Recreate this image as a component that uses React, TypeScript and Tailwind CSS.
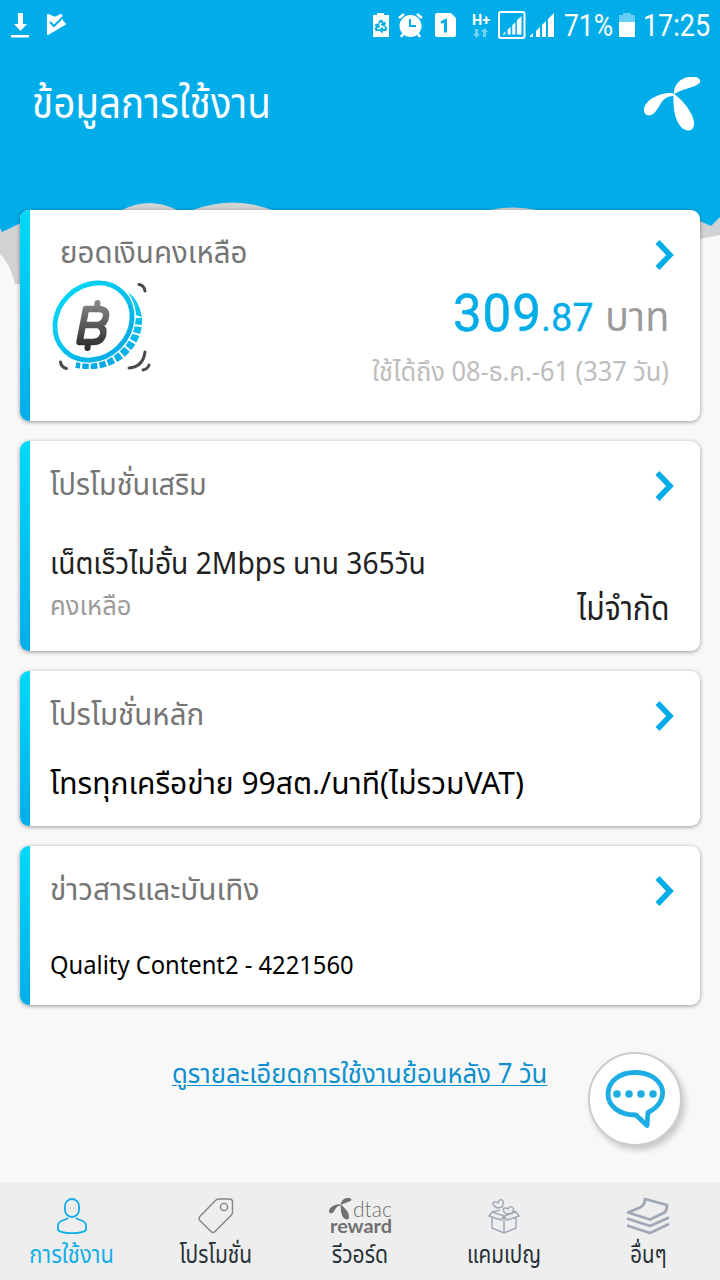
import type { ReactNode } from 'react';
import { Recycle } from 'lucide-react';

const navItems = [
  { label: 'การใช้งาน', icon: <UserIcon />, className: 'text-[#10ade9]', scale: 'scale-x-91' },
  { label: 'โปรโมชั่น', icon: <TagIcon />, className: 'text-[#263038]', scale: 'scale-x-87' },
  { label: 'รีวอร์ด', icon: <RewardIcon />, className: 'text-[#263038]', scale: 'scale-x-88' },
  { label: 'แคมเปญ', icon: <GiftIcon />, className: 'text-[#263038]', scale: 'scale-x-86' },
  { label: 'อื่นๆ', icon: <LayersIcon />, className: 'text-[#263038]', scale: 'scale-x-85' },
];

function UserIcon() {
  return (
    <svg width="32" height="38" viewBox="0 0 32 38" fill="none" stroke="#10ade9" strokeWidth="1.8">
      <rect x="9" y="2" width="14" height="18" rx="7" />
      <path d="M12 21C11 23 2 23 2 28V32C2 37.500 30 37.500 30 32V28C30 23 21 23 20 21" />
    </svg>
  );
}

function TagIcon() {
  return (
    <svg width="36" height="36" viewBox="0 0 36 36" fill="none" stroke="#858585" strokeWidth="1.4">
      <path d="M20 1H31.500Q34.500 1 34.500 4V14Q34.500 16 33 17.500L17 33.500Q15 35.500 13 33.500L1.800 22.500Q.3 20.500 1.800 18.500L17.500 2.500Q19 1 20 1Z" />
      <circle cx="26" cy="9" r="3.600" />
    </svg>
  );
}

function PropellerPaths() {
  return (
    <>
      <path d="M30 19C29 8 36 1 45 0C52-1 57 1 56 5C54 10 38 12 31 16.500Z" />
      <path d="M29 16C16 15 0 23 0 33C0 40 8 40 12 34C16 29 19 18 30 19Z" />
      <path d="M30 17C39 23 51 38 50 48C49 55 42 55 37 50C30 42 29 29 29.500 17Z" />
    </>
  );
}

function RewardIcon() {
  return (
    <svg width="72" height="38" viewBox="-4 0 72 38" fill="#707070" className="overflow-visible">
      <g transform="translate(1 1) scale(.4)">
        <PropellerPaths />
      </g>
      <text x="25" y="19.500" fontSize="21" fontFamily="Lato" fontWeight="300" textLength="39" lengthAdjust="spacingAndGlyphs">dtac</text>
      <text x="2" y="36" fontSize="18" fontFamily="Lato" fontWeight="700" textLength="62" lengthAdjust="spacingAndGlyphs">reward</text>
    </svg>
  );
}

function GiftIcon() {
  return (
    <svg width="32" height="36" viewBox="0 0 32 36" fill="none" stroke="#a3abb7" strokeWidth="1.5" strokeLinejoin="round">
      <path d="M4 19V30L16 35L28 30V19M16 18V35M4 14L16 18L13 22L1 18ZM28 14L16 18L19 22L31 18ZM4 14L12 12M28 14L25 13" />
      <path d="M9 10C5 8 4 5 6 4Q8 3 10 5Q11 1 14 2Q17 4 14 9Z" />
      <path d="M18 16C14 13 15 10 17 10Q19 10 20 11Q22 8 24 9Q27 11 24 15Z" />
    </svg>
  );
}

function LayersIcon() {
  return (
    <svg width="44" height="38" viewBox="0 0 44 38" fill="none" stroke="#a0a8b6" strokeWidth="2.800" strokeLinejoin="round">
      <path d="M19 2L41 8Q41 13 38.500 15.500L24 22.500L2 15.500L14 10.500Q19 8 19 2Z" />
      <path d="M1 21.500L24 29L43 20.500M1 28.500L24 36L43 27" />
    </svg>
  );
}

function CoinIcon() {
  return (
    <svg width="102" height="98" viewBox="0 0 102 98" fill="none">
      <defs>
        <linearGradient id="coin" gradientUnits="userSpaceOnUse" x1="0" y1="0" x2="0" y2="90">
          <stop stopColor="#00d8f8" />
          <stop offset="1" stopColor="#05a8e5" />
        </linearGradient>
        <linearGradient id="baht" gradientUnits="userSpaceOnUse" x1="0" y1="22" x2="0" y2="70">
          <stop stopColor="#8c8c8c" />
          <stop offset="1" stopColor="#2c2c2c" />
        </linearGradient>
      </defs>
      <path d="M88 40Q89 59 75 73Q57 91 26 86" stroke="url(#coin)" strokeWidth="8" strokeDasharray="6.500 2" />
      <path d="M78 14Q89 22 92 39L86 37Q84 24 78 14Z" fill="url(#coin)" />
      <ellipse cx="43.500" cy="43.500" rx="42" ry="37" transform="rotate(-45 43.500 43.500)" fill="white" stroke="white" strokeWidth="5.500" />
      <ellipse cx="43.500" cy="43.500" rx="41" ry="36" transform="rotate(-45 43.500 43.500)" stroke="url(#coin)" strokeWidth="4.800" />
      <g stroke="url(#baht)" strokeWidth="6.500" strokeLinejoin="round" strokeLinecap="round">
        <path d="M36 31H48Q57 31 56 38Q55 46 48 47H34M48 47Q55 50 53 57Q51 64 43 64H29.500L36 31" />
        <path d="M47.500 25L47 31M38 64L37.500 70" strokeWidth="6" />
      </g>
      <g stroke="#4a4a4a" strokeWidth="3" strokeLinecap="round">
        <path d="M89 6.500Q94 7 95 13M10.500 84Q11 89 16.500 90.500M95 74Q93 89 79 90M93 92Q98 91 99 87" />
      </g>
    </svg>
  );
}

function SignalIcon() {
  return <path d="M0 24V23L3 20V24ZM6 24V18L10 14V24ZM12 24V12L16 8V24ZM18 24V6L24 0V24Z" />;
}

function StatusBar() {
  return (
    <div className="flex h-[50px] shrink-0 items-center justify-between pl-[11px] text-white">
      <div className="flex items-center gap-[17px]">
        <svg width="18" height="25" viewBox="0 0 18 25" fill="white">
          <path d="M7 0H12V11H16L9.500 18L3 11H7ZM0 22H18V24.500H0Z" />
        </svg>
        <svg width="21" height="22" viewBox="0 0 21 22">
          <path d="M2 1L9 4L15 1L16 7L19 10L2 20Z" fill="white" stroke="white" strokeWidth="2" strokeLinejoin="round" />
          <path d="M4 8L8 12L18 2" stroke="#00ade9" strokeWidth="2" fill="none" />
          <path d="M10 6L16 1" stroke="white" strokeWidth="2" fill="none" />
        </svg>
      </div>
      <svg className="font-[Roboto]" width="348" height="40" viewBox="372 5 348 40" fill="white">
        <path d="M373 15H377V13H384V15H389V37H373Z" />
        <Recycle x={374} y={19} width={14} height={14} color="#00ade9" strokeWidth={3.5} />
        <circle cx="410.500" cy="26" r="11" />
        <path d="M399 18L404 14M417 14L422 18M403 34L401 37M418 34L420 37" stroke="white" strokeWidth="2.500" />
        <path d="M410 19V26H416" stroke="#00ade9" strokeWidth="2" fill="none" />
        <path d="M436 13H451L456 18V35Q456 37 454 37H437Q435 37 435 35V15Q435 13 437 13Z" />
        <path d="M441 22.500L445.500 20.500V32.500" stroke="#00ade9" strokeWidth="3" fill="none" />
        <text x="472" y="25" fontSize="14" fontWeight="700" textLength="18" lengthAdjust="spacingAndGlyphs">H+</text>
        <path d="M475 29H478V34H480L476.500 38L473 34H475ZM483 37V32H481L484.500 28L488 32H486V37Z" opacity=".45" />
        <rect x="499" y="12" width="25.500" height="26" rx="2" fill="none" stroke="white" strokeWidth="2" />
        <g transform="translate(503 16) scale(.77)"><SignalIcon /></g>
        <g transform="translate(530 13)"><SignalIcon /></g>
        <text x="564" y="36" fontSize="31" textLength="49" lengthAdjust="spacingAndGlyphs">71%</text>
        <path d="M619 15H623V13H631V15H635V22H619Z" opacity=".4" />
        <path d="M619 22H635V37H619Z" />
        <text x="643" y="36" fontSize="31" textLength="67" lengthAdjust="spacingAndGlyphs">17:25</text>
      </svg>
    </div>
  );
}

interface CardProps {
  title: string;
  titleClass: string;
  className: string;
  children: ReactNode;
}

function Card({ title, titleClass, className, children }: CardProps) {
  return (
    <section className={`flex shrink-0 overflow-hidden rounded-[9px] bg-white shadow-[0_1px_4px_rgba(0,0,0,0.4)] ${className}`}>
      <div className="w-[10px] shrink-0 bg-linear-to-b from-[#00d9f8] to-[#00adea]" />
      <div className="flex min-w-0 flex-1 flex-col pr-[31px] pl-5">
        <div className="flex h-[88px] shrink-0 items-center justify-between">
          <h2 className={`origin-left pb-1 text-[31px] leading-[40px] whitespace-nowrap text-[#757575] ${titleClass}`}>{title}</h2>
          <svg className="mt-0.5 -mr-[6px]" width="20" height="32" viewBox="0 0 20 32" fill="none" stroke="#00ade9" strokeWidth="5.500">
            <path d="M2.500 3L15 16L2.500 29" />
          </svg>
        </div>
        {children}
      </div>
    </section>
  );
}

export default function App() {
  return (
    <div className="grid h-[1280px] w-[720px] grid-rows-[1280px] overflow-hidden bg-[#f8f8f8] font-['Noto_Sans','Noto_Sans_Thai','Open_Sans',sans-serif]">
      {/* Sky and clouds */}
      <svg className="col-start-1 row-start-1" width="720" height="300" viewBox="0 0 720 300">
        <path d="M0 0H720V235L700 239V284H15Q10 263 0 254Z" fill="#d0d2d4" />
        <path d="M0 0H720V217L711 226L700 221H545L537 210Q514 205 490 210L480 221H285L272 210Q233 195 193 210L185 221L177 210Q149 196 122 210L110 221H25L2 232L0 228Z" fill="#00ade9" />
      </svg>

      <div className="col-start-1 row-start-1 flex min-h-0 flex-col">
        <StatusBar />
        <header className="flex h-[160px] shrink-0 items-start justify-between pr-5 pl-8">
          <h1 className="origin-left scale-x-92 pt-[22px] text-[42px] leading-[60px] whitespace-nowrap text-white">ข้อมูลการใช้งาน</h1>
          <svg className="mt-[27px]" width="56" height="55" viewBox="0 0 56 55" fill="white">
            <PropellerPaths />
          </svg>
        </header>

        <main className="flex flex-1 flex-col px-5">
          <Card title="ยอดเงินคงเหลือ" titleClass="-mt-[2px] ml-[10px] scale-x-95" className="mb-5 h-[211px]">
            <div className="-mt-5 flex justify-between">
              <CoinIcon />
              <div className="flex flex-col items-end">
                <p className="flex items-baseline pt-[6px] leading-[60px] whitespace-nowrap">
                  <span className="mr-[-1px] font-[Roboto] text-[51px] tracking-[1px] text-[#00ade9] [-webkit-text-stroke:0.5px]">309</span>
                  <span className="mr-[9px] font-[Roboto] text-[38px] text-[#00ade9] [-webkit-text-stroke:0.3px]">.87</span>
                  <span className="origin-right scale-x-97 text-[41px] text-[#9b9b9b]">บาท</span>
                </p>
                <p className="origin-right scale-x-94 pt-[2px] text-[27px] leading-[42px] whitespace-nowrap text-[#bdbdbd]">ใช้ได้ถึง 08-ธ.ค.-61 (337 วัน)</p>
              </div>
            </div>
          </Card>

          <Card title="โปรโมชั่นเสริม" titleClass="scale-x-93" className="mb-5 h-[210px]">
            <p className="origin-left scale-x-94 pt-px text-[30px] leading-[66px] whitespace-nowrap text-[#212121]">เน็ตเร็วไม่อั้น 2Mbps นาน 365วัน</p>
            <div className="-mt-px flex justify-between leading-[20px]">
              <span className="origin-left scale-x-95 text-[27px] text-[#9b9b9b]">คงเหลือ</span>
              <span className="origin-right scale-x-91 pt-[3px] text-[33px] text-[#212121]">ไม่จำกัด</span>
            </div>
          </Card>

          <Card title="โปรโมชั่นหลัก" titleClass="scale-x-95" className="mb-5 h-[155px]">
            <p className="w-fit pt-px text-[30px] leading-[46px] whitespace-nowrap text-black">โทรทุกเครือข่าย 99สต./นาที(ไม่รวมVAT)</p>
          </Card>

          <Card title="ข่าวสารและบันเทิง" titleClass="scale-x-96" className="h-[159px]">
            <p className="origin-left scale-x-95 text-[25px] leading-[61px] whitespace-nowrap text-black">Quality Content2 - 4221560</p>
          </Card>

          <div className="flex items-start justify-between pt-[47px] pr-[18px] pl-[152px]">
            <a href="#history" className="w-[400px] origin-left scale-x-95 pt-px text-[27px] leading-[40px] whitespace-nowrap text-[#0d8fcf] underline decoration-1 underline-offset-2">
              ดูรายละเอียดการใช้งานย้อนหลัง 7 วัน
            </a>
            <button className="flex size-[94px] shrink-0 items-center justify-center rounded-full border-2 border-[#ccc] bg-white shadow-[3px_4px_6px_rgba(0,0,0,0.2)]">
              <svg width="60" height="60" viewBox="0 0 60 60" fill="none" stroke="#1eace5" strokeWidth="4.800" strokeLinejoin="round">
                <path d="M30 3.500C15 3.500 3 12 3 25C3 37 14 46 31 46L42 56.500L43 43.500C68 31 59 3.500 30 3.500Z" />
                <path d="M12 25H12.010M24 25H24.010M36 25H36.010M48 25H48.010" strokeWidth="7.500" strokeLinecap="round" />
              </svg>
            </button>
          </div>
        </main>

        <nav className="grid h-[98px] shrink-0 grid-cols-5 bg-[#eee]">
          {navItems.map((item) => (
            <a key={item.label} href="#tab" className={`flex flex-col items-center pt-[15px] ${item.className}`}>
              <div className="flex h-[38px] items-center">{item.icon}</div>
              <span className={`text-[24px] leading-[37px] whitespace-nowrap ${item.scale}`}>{item.label}</span>
            </a>
          ))}
        </nav>
      </div>
    </div>
  );
}
